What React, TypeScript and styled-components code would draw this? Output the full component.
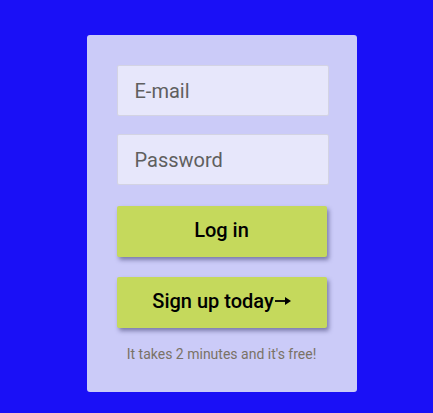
import React from "react";
import styled, { createGlobalStyle } from "styled-components";

const Global = createGlobalStyle`
  html, body { margin: 0; padding: 0; background: #1a10f6; }
  body { font-family: Roboto, "Noto Sans", sans-serif; }
  * { box-sizing: border-box; }
`;

const Page = styled.div`
  display: flex;
  justify-content: center;
  padding: 35px 0 0 10px;
  min-height: 413px;
`;

const Card = styled.form`
  width: 270px;
  height: 357px;
  background: #cbcbf8;
  border-radius: 3px;
  padding: 30px 28px 0 30px;
  display: flex;
  flex-direction: column;
`;

const Input = styled.input<{ $mb?: number }>`
  height: 51px;
  width: 212px;
  background: #e7e7fb;
  border: 1px solid #d3d3e3;
  border-radius: 2px;
  padding: 0 17px;
  font-family: Roboto, sans-serif;
  font-size: 20px;
  color: #555;
  outline: none;
  margin-bottom: ${(p) => p.$mb ?? 18}px;
  &::placeholder { color: #5f5f5f; }
`;

const Button = styled.button<{ $mb?: number }>`
  height: 51px;
  width: 210px;
  background: #c5d95c;
  border: none;
  border-radius: 2px;
  box-shadow: 2px 3px 4px rgba(60, 60, 110, 0.55);
  font-family: Roboto, sans-serif;
  font-weight: 500;
  font-size: 20px;
  color: #000;
  padding: 0 0 4px;
  cursor: pointer;
  margin-bottom: ${(p) => p.$mb ?? 20}px;
`;

const ArrowIcon = styled.svg`
  width: 16px;
  height: 10px;
  margin-left: 1px;
  vertical-align: 2px;
`;

const Note = styled.p`
  margin: 0;
  width: 210px;
  text-align: center;
  font-size: 14px;
  color: #7a7266;
`;

export default function App() {
  return (
    <>
      <Global />
      <Page>
        <Card onSubmit={(e) => e.preventDefault()}>
          <Input type="email" placeholder="E-mail" />
          <Input type="password" placeholder="Password" $mb={21} />
          <Button type="submit">Log in</Button>
          <Button type="button" $mb={18}>
            Sign up today
            <ArrowIcon viewBox="0 0 16 10" aria-hidden="true">
              <line x1="0" y1="5" x2="12" y2="5" stroke="#000" strokeWidth="1.8" />
              <polygon points="10,1 16,5 10,9" fill="#000" />
            </ArrowIcon>
          </Button>
          <Note>It takes 2 minutes and it's free!</Note>
        </Card>
      </Page>
    </>
  );
}
